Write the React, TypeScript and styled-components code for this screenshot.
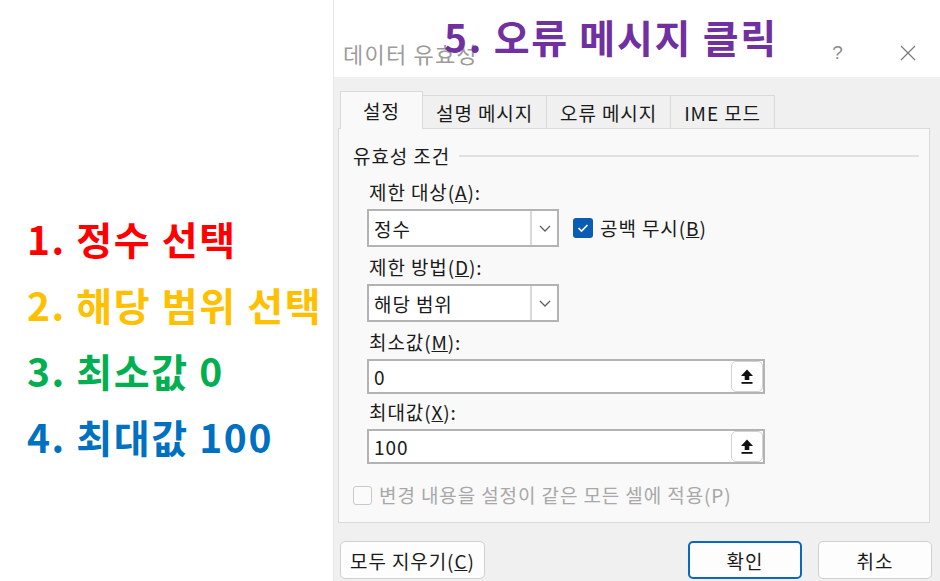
import React from 'react';
import styled, { createGlobalStyle, css } from 'styled-components';

const GlobalStyle = createGlobalStyle`
  html, body {
    margin: 0;
    padding: 0;
    background: #ffffff;
  }
  body {
    font-family: 'Noto Sans CJK KR', 'Noto Sans', sans-serif;
  }
`;

const Page = styled.div`
  position: relative;
  display: flex;
  width: 940px;
  height: 581px;
  overflow: hidden;
  background: #ffffff;
  font-family: 'Noto Sans CJK KR', 'Noto Sans', sans-serif;
`;

// left hand step notes
const Notes = styled.div`
  width: 306px;
  flex-shrink: 0;
  padding: 216px 0 0 27px;
  display: flex;
  flex-direction: column;
  gap: 22px;
`;

const Note = styled.div<{ $color: string }>`
  color: ${(p) => p.$color};
  font-size: 39px;
  font-weight: 700;
  letter-spacing: 1.6px;
  line-height: 44px;
  white-space: nowrap;
`;

const Callout = styled.div`
  position: absolute;
  left: 444px;
  top: 14px;
  color: #7030a0;
  font-size: 39px;
  font-weight: 700;
  letter-spacing: 1.7px;
  line-height: 44px;
  white-space: nowrap;
  z-index: 5;
`;

const Dialog = styled.div`
  flex: 1;
  display: flex;
  flex-direction: column;
  border-left: 1px solid #e6e6e6;
  color: #1a1a1a;
  font-size: 19px;
  letter-spacing: 0.9px;
`;

const TitleBar = styled.div`
  height: 77px;
  box-sizing: border-box;
  padding: 28px 24px 0 9px;
  display: flex;
  align-items: center;
  background: #ffffff;
`;

const TitleText = styled.span`
  color: #9c9c9c;
  font-size: 22px;
  letter-spacing: 1.2px;
`;

const TitleButtons = styled.div`
  margin-left: auto;
  display: flex;
  align-items: center;
  gap: 52px;
`;

const HelpMark = styled.span`
  width: 20px;
  text-align: center;
  color: #8c8c8c;
  font-family: 'Liberation Sans', sans-serif;
  font-size: 19px;
`;

const Body = styled.div`
  flex: 1;
  background: #f0f0f0;
  padding: 14px 10px 0 4px;
  display: flex;
  flex-direction: column;
`;

const TabRow = styled.div`
  display: flex;
  align-items: flex-end;
  height: 37px;
  margin-left: 2px;
`;

const Tab = styled.div<{ $active?: boolean }>`
  position: relative;
  box-sizing: border-box;
  min-width: 83px;
  padding: 0 13px;
  display: flex;
  align-items: center;
  justify-content: center;
  border: 1px solid #dadada;
  border-bottom: none;
  white-space: nowrap;
  ${(p) =>
    p.$active
      ? css`
          height: 38px;
          background: #f9f9f9;
          z-index: 1;
          margin-bottom: -1px;
        `
      : css`
          height: 33px;
          background: #f0f0f0;
          border-left: none;
        `}
`;

const Panel = styled.div`
  height: 395px;
  box-sizing: border-box;
  background: #f9f9f9;
  border: 1px solid #dadada;
  padding: 16px 10px 0 14px;
  display: flex;
  flex-direction: column;
`;

const GroupHeader = styled.div`
  display: flex;
  align-items: center;
  gap: 9px;
  line-height: 22px;
  margin-bottom: 14px;
`;

const GroupLine = styled.div`
  flex: 1;
  height: 2px;
  background: #e1e1e1;
`;

const Fields = styled.div`
  margin-left: 14px;
  display: flex;
  flex-direction: column;
`;

const Label = styled.div`
  line-height: 22px;
  padding-left: 2px;
  margin-bottom: 6px;
`;

const Row = styled.div`
  display: flex;
  align-items: center;
  gap: 14px;
  margin-bottom: 9px;
`;

const Combo = styled.div`
  box-sizing: border-box;
  width: 192px;
  height: 38px;
  border: 2px solid #b3b3b3;
  background: #ffffff;
  display: flex;
  align-items: stretch;
`;

const ComboText = styled.div`
  flex: 1;
  display: flex;
  align-items: center;
  padding-left: 5px;
`;

const ComboArrow = styled.div`
  width: 25px;
  border-left: 2px solid #d9d9d9;
  display: flex;
  align-items: center;
  justify-content: center;
`;

const CheckLabel = styled.label<{ $disabled?: boolean }>`
  display: flex;
  align-items: center;
  gap: 7px;
  line-height: 22px;
  color: ${(p) => (p.$disabled ? '#a8a8a8' : '#1a1a1a')};
`;

const Box = styled.span<{ $checked?: boolean }>`
  box-sizing: border-box;
  width: ${(p) => (p.$checked ? 20 : 19)}px;
  height: ${(p) => (p.$checked ? 20 : 19)}px;
  border-radius: 3px;
  display: flex;
  align-items: center;
  justify-content: center;
  ${(p) =>
    p.$checked
      ? css`
          background: #0b5cb4;
        `
      : css`
          border: 1.5px solid #c9c9c9;
          background: #fbfbfb;
        `}
`;

const Input = styled.div`
  box-sizing: border-box;
  width: 398px;
  height: 35px;
  border: 2px solid #b3b3b3;
  background: #ffffff;
  display: flex;
  align-items: center;
  padding: 0 0 0 5px;
  margin-bottom: 7px;
`;

const InputValue = styled.span`
  flex: 1;
`;

const RefButton = styled.div`
  box-sizing: border-box;
  width: 32px;
  height: 31px;
  border: 1px solid #d2d2d2;
  border-radius: 5px;
  background: #ffffff;
  display: flex;
  align-items: center;
  justify-content: center;
`;

const ApplyRow = styled.div`
  margin-top: 13px;
`;

const Footer = styled.div`
  display: flex;
  align-items: center;
  gap: 16px;
  padding: 18px 0 0 2px;
  margin-right: -2px;
`;

const Button = styled.div<{ $primary?: boolean }>`
  box-sizing: border-box;
  height: 38px;
  min-width: 114px;
  padding: 0 9px;
  display: flex;
  align-items: center;
  justify-content: center;
  border-radius: 5px;
  background: #fdfdfd;
  white-space: nowrap;
  border: ${(p) => (p.$primary ? '2px solid #0a67c2' : '1px solid #d0d0d0')};
`;

const Spacer = styled.div`
  flex: 1;
`;

const notes = [
  { text: '1. 정수 선택', color: '#ff0000' },
  { text: '2. 해당 범위 선택', color: '#ffc000' },
  { text: '3. 최소값 0', color: '#00b050' },
  { text: '4. 최대값 100', color: '#0070c0' },
];

const tabs = ['설정', '설명 메시지', '오류 메시지', 'IME 모드'];

const Chevron = () => (
  <svg width="12" height="7" viewBox="0 0 12 7">
    <polyline points="1,1 6,6 11,1" fill="none" stroke="#5f5f5f" strokeWidth="1.3" />
  </svg>
);

const UpArrow = () => (
  <svg width="16" height="17" viewBox="0 0 16 17">
    <path d="M8 1.5 L14 8 H10.3 V12 H5.7 V8 H2 Z" fill="#111111" />
    <rect x="2.5" y="14" width="11" height="1.8" fill="#111111" />
  </svg>
);

const CloseIcon = () => (
  <svg width="16" height="16" viewBox="0 0 16 16">
    <line x1="1" y1="1" x2="15" y2="15" stroke="#7d7d7d" strokeWidth="1.3" />
    <line x1="15" y1="1" x2="1" y2="15" stroke="#7d7d7d" strokeWidth="1.3" />
  </svg>
);

const CheckMark = () => (
  <svg width="12" height="10" viewBox="0 0 12 10">
    <polyline points="1.5,5 4.5,8 10.5,2" fill="none" stroke="#ffffff" strokeWidth="1.6" />
  </svg>
);

export default function App() {
  return (
    <Page>
      <GlobalStyle />
      <Notes>
        {notes.map((n) => (
          <Note key={n.text} $color={n.color}>
            {n.text}
          </Note>
        ))}
      </Notes>

      <Dialog>
        <TitleBar>
          <TitleText>데이터 유효성</TitleText>
          <TitleButtons>
            <HelpMark>?</HelpMark>
            <CloseIcon />
          </TitleButtons>
        </TitleBar>

        <Body>
          <TabRow>
            {tabs.map((t, i) => (
              <Tab key={t} $active={i === 0}>
                {t}
              </Tab>
            ))}
          </TabRow>

          <Panel>
            <GroupHeader>
              <span>유효성 조건</span>
              <GroupLine />
            </GroupHeader>

            <Fields>
              <Label>
                제한 대상(<u>A</u>):
              </Label>
              <Row>
                <Combo>
                  <ComboText>정수</ComboText>
                  <ComboArrow>
                    <Chevron />
                  </ComboArrow>
                </Combo>
                <CheckLabel>
                  <Box $checked>
                    <CheckMark />
                  </Box>
                  <span>
                    공백 무시(<u>B</u>)
                  </span>
                </CheckLabel>
              </Row>

              <Label>
                제한 방법(<u>D</u>):
              </Label>
              <Row>
                <Combo>
                  <ComboText>해당 범위</ComboText>
                  <ComboArrow>
                    <Chevron />
                  </ComboArrow>
                </Combo>
              </Row>

              <Label>
                최소값(<u>M</u>):
              </Label>
              <Input>
                <InputValue>0</InputValue>
                <RefButton>
                  <UpArrow />
                </RefButton>
              </Input>

              <Label>
                최대값(<u>X</u>):
              </Label>
              <Input>
                <InputValue>100</InputValue>
                <RefButton>
                  <UpArrow />
                </RefButton>
              </Input>
            </Fields>

            <ApplyRow>
              <CheckLabel $disabled>
                <Box />
                <span>변경 내용을 설정이 같은 모든 셀에 적용(P)</span>
              </CheckLabel>
            </ApplyRow>
          </Panel>

          <Footer>
            <Button>
              모두 지우기(<u>C</u>)
            </Button>
            <Spacer />
            <Button $primary>확인</Button>
            <Button>취소</Button>
          </Footer>
        </Body>
      </Dialog>

      <Callout>5. 오류 메시지 클릭</Callout>
    </Page>
  );
}
